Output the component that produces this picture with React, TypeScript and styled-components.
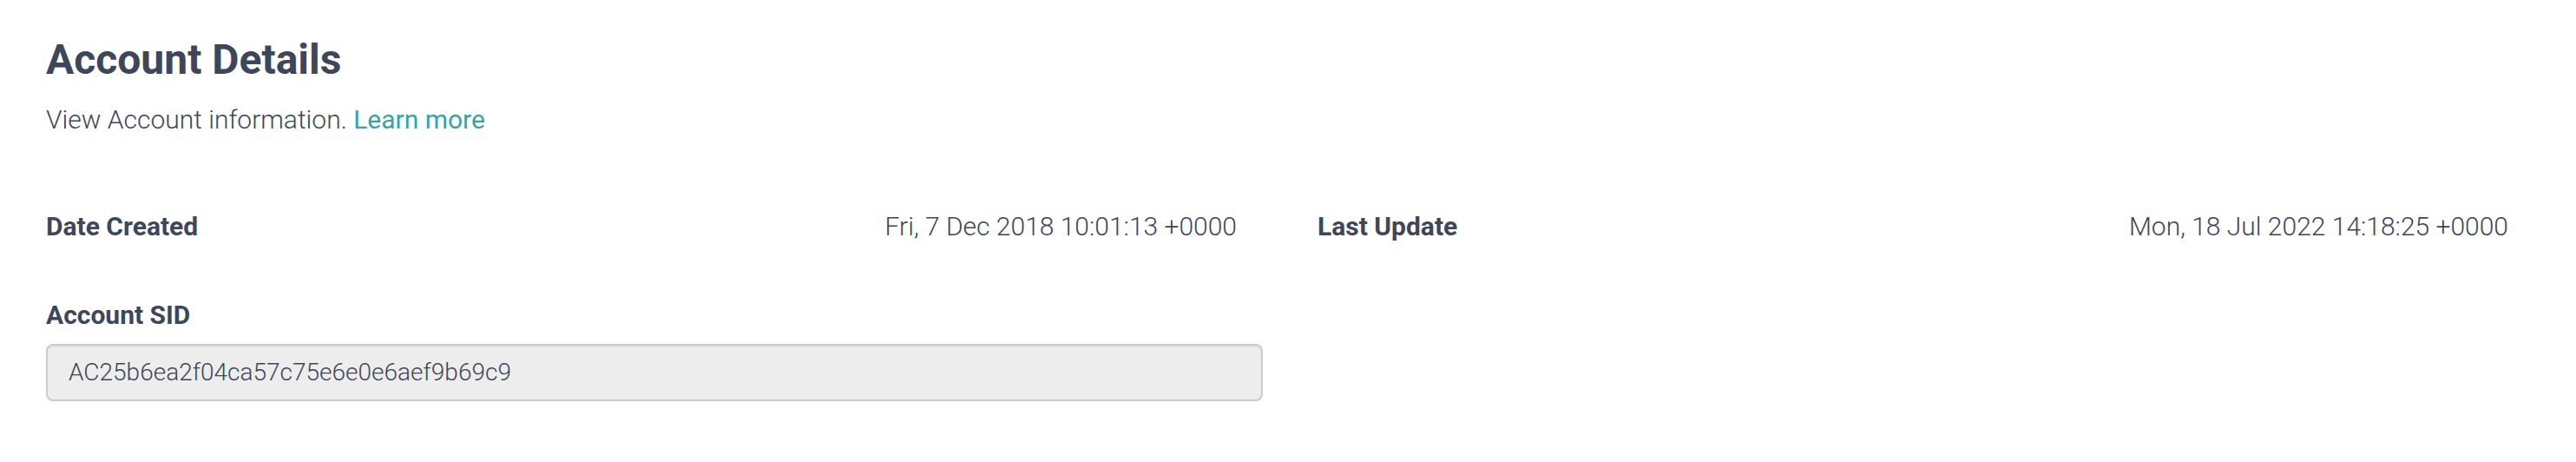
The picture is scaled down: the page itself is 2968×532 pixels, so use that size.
import React from "react";
import styled, { createGlobalStyle } from "styled-components";

const GlobalStyle = createGlobalStyle`
  html, body {
    margin: 0;
    padding: 0;
    background: #ffffff;
  }
  body {
    font-family: Roboto, "Liberation Sans", Arial, sans-serif;
    color: #3d4759;
  }
`;

const Page = styled.main`
  padding: 40px 78px 60px 53px;
  box-sizing: border-box;
  width: 2968px;
`;

const Title = styled.h1`
  margin: 0;
  font-size: 48px;
  line-height: 58px;
  font-weight: 700;
  color: #3d4759;
`;

const Subtitle = styled.p`
  margin: 20px 0 0;
  font-size: 30px;
  line-height: 40px;
  font-weight: 300;
  color: #3d4759;
`;

const Link = styled.a`
  color: #36a3a6;
  font-weight: 400;
  text-decoration: none;
`;

const DetailGrid = styled.div`
  display: grid;
  grid-template-columns: 1372px 1372px;
  column-gap: 93px;
  margin-top: 83px;
`;

const DetailRow = styled.div`
  display: flex;
  justify-content: space-between;
  align-items: baseline;
`;

const Label = styled.span`
  font-size: 30px;
  line-height: 40px;
  font-weight: 700;
  color: #3d4759;
`;

const Value = styled.span`
  font-size: 30px;
  line-height: 40px;
  font-weight: 300;
  color: #3d4759;
`;

const Field = styled.div`
  display: flex;
  flex-direction: column;
  gap: 13px;
  margin-top: 62px;
`;

const SidBox = styled.div`
  width: 1402px;
  height: 66px;
  box-sizing: border-box;
  border: 2px solid #cbcbcb;
  border-radius: 8px;
  background: #ededed;
  box-shadow: inset 0 2px 2px rgba(0, 0, 0, 0.05);
  padding: 0 24px;
  font-size: 28px;
  line-height: 62px;
  font-weight: 300;
  color: #3d4759;
`;

const details = [
  { label: "Date Created", value: "Fri, 7 Dec 2018 10:01:13 +0000" },
  { label: "Last Update", value: "Mon, 18 Jul 2022 14:18:25 +0000" },
];

export default function App() {
  return (
    <>
      <GlobalStyle />
      <Page>
        <Title>Account Details</Title>
        <Subtitle>
          View Account information. <Link href="#">Learn more</Link>
        </Subtitle>
        <DetailGrid>
          {details.map((d) => (
            <DetailRow key={d.label}>
              <Label>{d.label}</Label>
              <Value>{d.value}</Value>
            </DetailRow>
          ))}
        </DetailGrid>
        <Field>
          <Label>Account SID</Label>
          <SidBox>AC25b6ea2f04ca57c75e6e0e6aef9b69c9</SidBox>
        </Field>
      </Page>
    </>
  );
}
